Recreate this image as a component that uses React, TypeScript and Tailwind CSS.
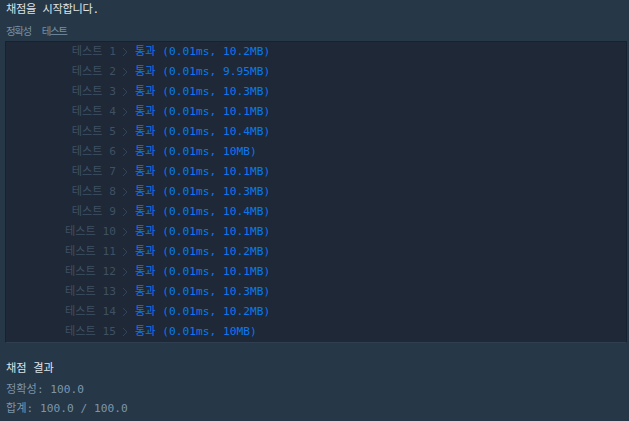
const results = [
  '10.2MB',
  '9.95MB',
  '10.3MB',
  '10.1MB',
  '10.4MB',
  '10MB',
  '10.1MB',
  '10.3MB',
  '10.4MB',
  '10.1MB',
  '10.2MB',
  '10.1MB',
  '10.3MB',
  '10.2MB',
  '10MB',
];

const mono = "font-['DejaVu_Sans_Mono','Noto_Sans_CJK_KR',monospace]";

function Chevron() {
  return (
    <svg width="6" height="10" viewBox="0 0 6 10" className="ml-[6px] mr-[7px] shrink-0">
      <path d="M1 1l4 4-4 4" fill="none" stroke="#33435a" strokeWidth="1" />
    </svg>
  );
}

export default function App() {
  return (
    <div className={`min-h-[421px] w-[629px] bg-[#263747] text-[11.2px] ${mono}`}>
      <div className="px-[6px] pt-[2px]">
        <p className="h-[16px] leading-[16px] tracking-[-0.3px] text-[#dfe4ea]">채점을 시작합니다.</p>
        <p className="mt-[4px] flex h-[18px] gap-[11px] text-[10.5px] leading-[18px] tracking-[-1.4px] text-[#7890a6]">
          <span>정확성</span>
          <span>테스트</span>
        </p>
      </div>
      <div className="ml-[5px] mr-[2px] mt-[1px] border border-[#172230] border-b-[#2f3f51] bg-[#1e2836]">
        {results.map((mem, i) => (
          <div key={i} className="flex h-[20px] items-center">
            <span className="w-[110px] text-right text-[#3e5064]">테스트 {i + 1}</span>
            <Chevron />
            <span className="text-[#0a78f0]">통과 (0.01ms, {mem})</span>
          </div>
        ))}
      </div>
      <div className="px-[6px] pt-[17px]">
        <p className="h-[18px] leading-[18px] text-[#dfe4ea]">채점 결과</p>
        <p className="mt-[3px] h-[18px] leading-[18px] text-[#7c95ab]">정확성: 100.0</p>
        <p className="mt-[1px] h-[18px] leading-[18px] text-[#7c95ab]">합계: 100.0 / 100.0</p>
      </div>
    </div>
  );
}
